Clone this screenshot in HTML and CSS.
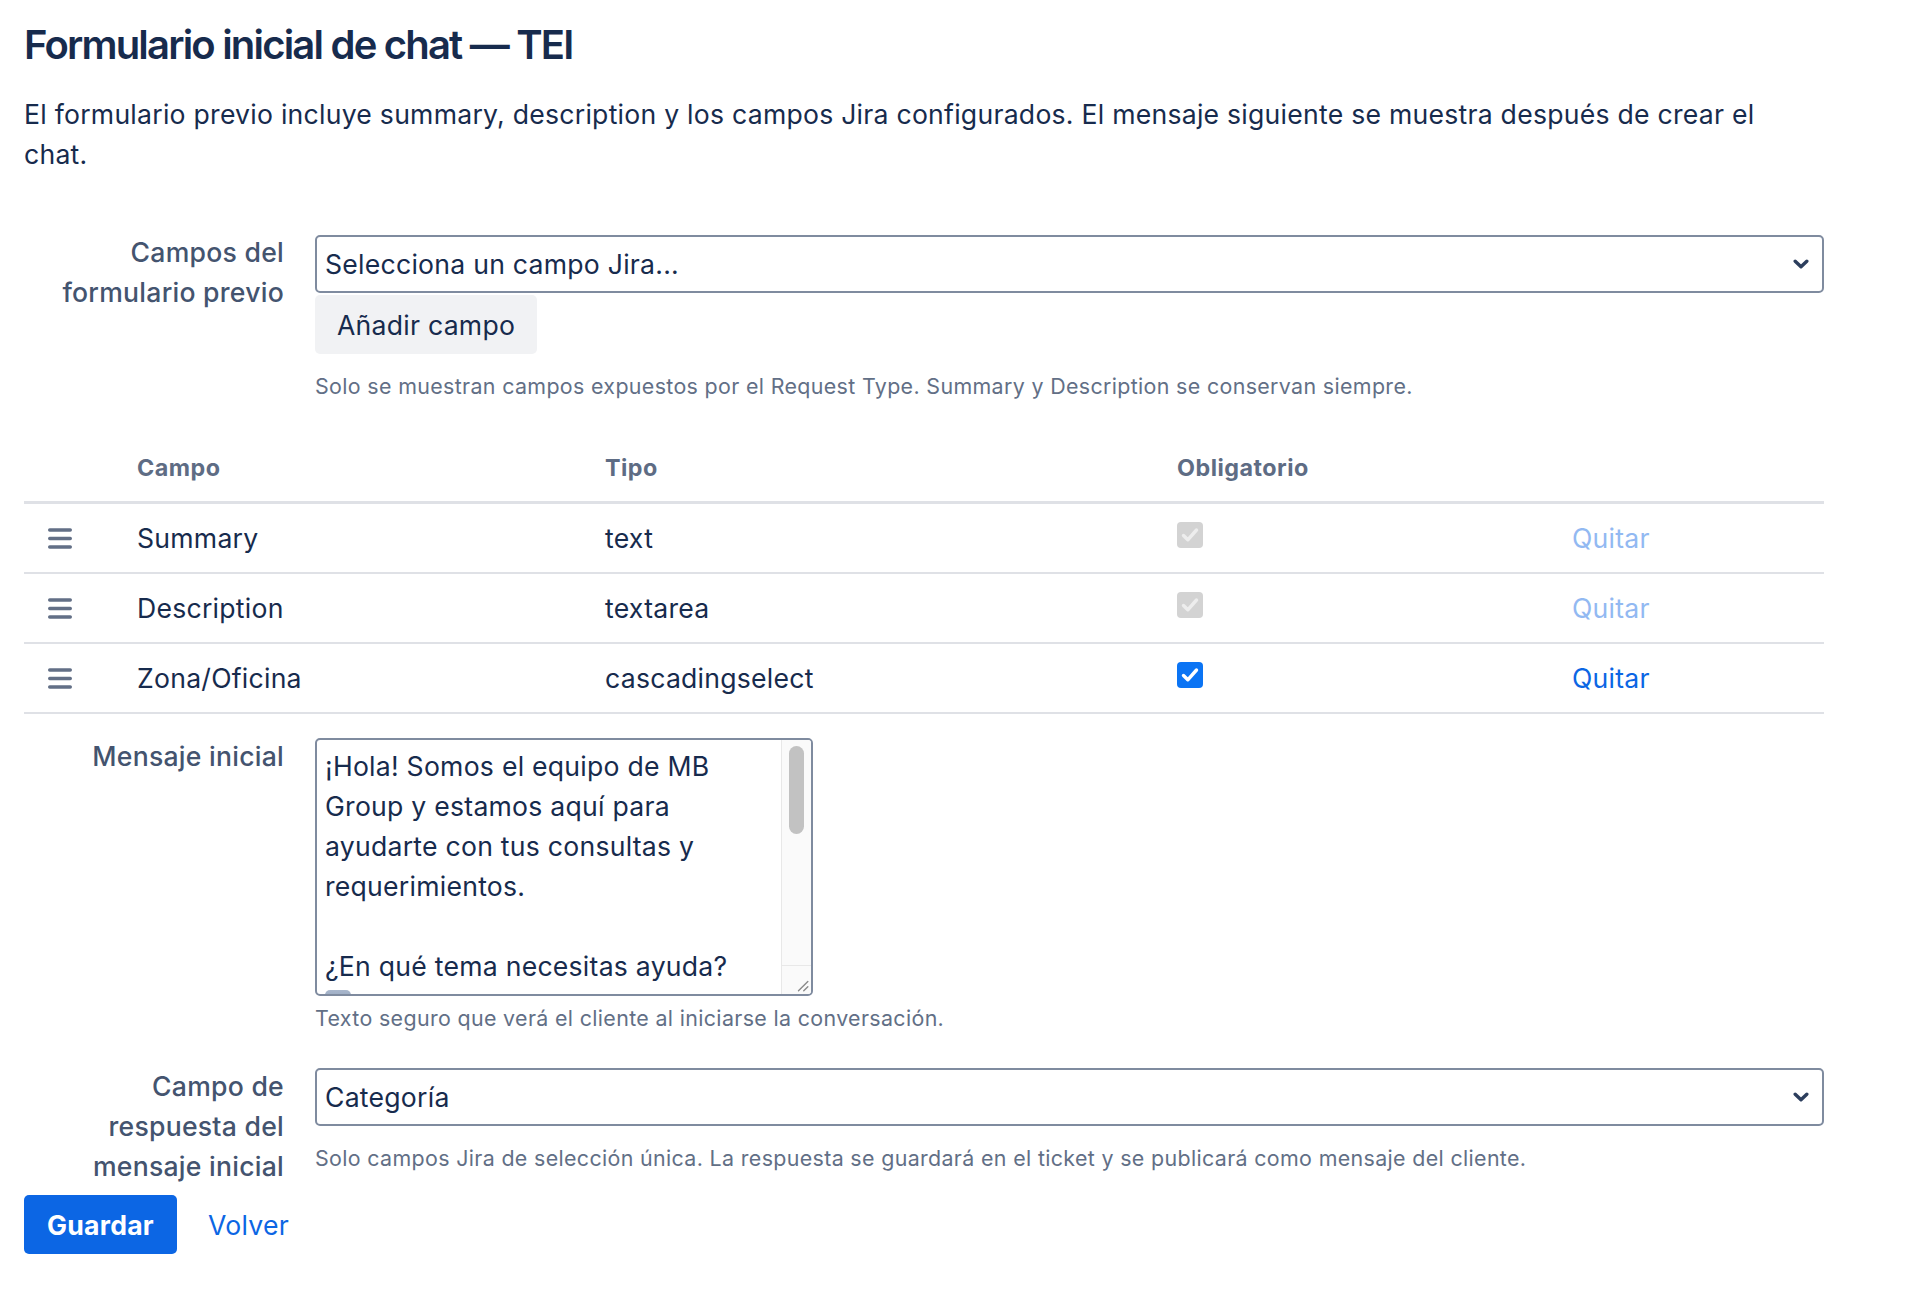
FILE: index.html
```html
<!DOCTYPE html>
<html lang="es">
<head>
<meta charset="utf-8">
<title>Formulario inicial de chat — TEI</title>
<link rel="stylesheet" href="styles.css">
</head>
<body>
<main class="page">
  <h1 class="title">Formulario inicial de chat — TEI</h1>
  <p class="intro">El formulario previo incluye summary, description y los campos Jira configurados. El mensaje siguiente se muestra después de crear el chat.</p>

  <div class="form-row row-fields">
    <label class="form-label" for="field-select">Campos del formulario previo</label>
    <div class="form-control">
      <div class="select-wrap">
        <select id="field-select" class="select"><option>Selecciona un campo Jira...</option></select>
        <svg class="chevron" viewBox="0 0 16 10" aria-hidden="true"><path d="M2.2 2.2 L8 7.8 L13.8 2.2" fill="none" stroke="#2C3E5D" stroke-width="3.4" stroke-linecap="round" stroke-linejoin="round"/></svg>
      </div>
      <button class="btn-secondary" type="button">Añadir campo</button>
      <p class="hint">Solo se muestran campos expuestos por el Request Type. Summary y Description se conservan siempre.</p>
    </div>
  </div>

  <table class="fields-table">
    <colgroup>
      <col class="c-drag"><col class="c-name"><col class="c-type"><col class="c-req"><col class="c-act">
    </colgroup>
    <thead>
      <tr><th></th><th>Campo</th><th>Tipo</th><th>Obligatorio</th><th></th></tr>
    </thead>
    <tbody>
      <tr>
        <td class="drag"><svg class="grip" viewBox="0 0 24 21" aria-hidden="true"><rect x="0" y="0.3" width="24" height="3.4" rx="1.7"/><rect x="0" y="8.8" width="24" height="3.4" rx="1.7"/><rect x="0" y="17.3" width="24" height="3.4" rx="1.7"/></svg></td>
        <td>Summary</td>
        <td>text</td>
        <td><span class="check is-disabled" role="checkbox" aria-checked="true" aria-disabled="true"><svg viewBox="0 0 26 26"><path d="M6.5 13.5 L10.8 17.8 L19.5 8" fill="none" stroke-width="3.4" stroke-linecap="round" stroke-linejoin="round"/></svg></span></td>
        <td><a class="remove is-disabled">Quitar</a></td>
      </tr>
      <tr>
        <td class="drag"><svg class="grip" viewBox="0 0 24 21" aria-hidden="true"><rect x="0" y="0.3" width="24" height="3.4" rx="1.7"/><rect x="0" y="8.8" width="24" height="3.4" rx="1.7"/><rect x="0" y="17.3" width="24" height="3.4" rx="1.7"/></svg></td>
        <td>Description</td>
        <td>textarea</td>
        <td><span class="check is-disabled" role="checkbox" aria-checked="true" aria-disabled="true"><svg viewBox="0 0 26 26"><path d="M6.5 13.5 L10.8 17.8 L19.5 8" fill="none" stroke-width="3.4" stroke-linecap="round" stroke-linejoin="round"/></svg></span></td>
        <td><a class="remove is-disabled">Quitar</a></td>
      </tr>
      <tr>
        <td class="drag"><svg class="grip" viewBox="0 0 24 21" aria-hidden="true"><rect x="0" y="0.3" width="24" height="3.4" rx="1.7"/><rect x="0" y="8.8" width="24" height="3.4" rx="1.7"/><rect x="0" y="17.3" width="24" height="3.4" rx="1.7"/></svg></td>
        <td>Zona/Oficina</td>
        <td>cascadingselect</td>
        <td><span class="check is-on" role="checkbox" aria-checked="true"><svg viewBox="0 0 26 26"><path d="M6.5 13.5 L10.8 17.8 L19.5 8" fill="none" stroke-width="3.4" stroke-linecap="round" stroke-linejoin="round"/></svg></span></td>
        <td><a class="remove" href="#">Quitar</a></td>
      </tr>
    </tbody>
  </table>

  <div class="form-row row-message">
    <label class="form-label" for="msg">Mensaje inicial</label>
    <div class="form-control">
      <div class="textarea" id="msg" role="textbox" aria-multiline="true">
        <div class="textarea-text">¡Hola! Somos el equipo de MB
Group y estamos aquí para
ayudarte con tus consultas y
requerimientos.

¿En qué tema necesitas ayuda?
<span class="keycap" aria-hidden="true"></span></div>
        <div class="scroll-track"><div class="scroll-thumb"></div></div>
        <div class="resizer"><svg viewBox="0 0 12 12" aria-hidden="true"><path d="M11 3 L3 11 M11 7.5 L7.5 11" stroke="#8A8A8A" stroke-width="1.2" stroke-linecap="round"/></svg></div>
      </div>
      <p class="hint hint-tight">Texto seguro que verá el cliente al iniciarse la conversación.</p>
    </div>
  </div>

  <div class="form-row row-answer">
    <label class="form-label" for="answer-select">Campo de respuesta del mensaje inicial</label>
    <div class="form-control">
      <div class="select-wrap">
        <select id="answer-select" class="select"><option>Categoría</option></select>
        <svg class="chevron" viewBox="0 0 16 10" aria-hidden="true"><path d="M2.2 2.2 L8 7.8 L13.8 2.2" fill="none" stroke="#2C3E5D" stroke-width="3.4" stroke-linecap="round" stroke-linejoin="round"/></svg>
      </div>
      <p class="hint">Solo campos Jira de selección única. La respuesta se guardará en el ticket y se publicará como mensaje del cliente.</p>
    </div>
  </div>

  <div class="actions">
    <button class="btn-primary" type="submit">Guardar</button>
    <a class="link-back" href="#">Volver</a>
  </div>
</main>
</body>
</html>
```

FILE: styles.css
```css
* { box-sizing: border-box; }

html, body {
  margin: 0;
  background: #ffffff;
}

body {
  font-family: Inter, "Noto Sans", "Liberation Sans", sans-serif;
  font-size: 26.6px;
  line-height: 40px;
  letter-spacing: 0.25px;
  color: #172B4D;
}

.page {
  width: 1800px;
  margin-left: 24px;
  padding-top: 17px;
}

.title {
  margin: 0;
  font-size: 40px;
  line-height: 56px;
  font-weight: 600;
  letter-spacing: -1.8px;
  color: #172B4D;
}

.intro {
  margin: 21px 0 0;
  max-width: 1790px;
}

.form-row {
  display: grid;
  grid-template-columns: 260px 1509px;
  column-gap: 31px;
}

.row-fields { margin-top: 58px; }
.row-message { margin-top: 22px; }
.row-answer { margin-top: 32px; }

.form-label {
  padding-left: 20px;
  text-align: right;
  font-weight: 500;
  color: #44546F;
}

.select-wrap {
  position: relative;
  margin-top: 3px;
}

.row-answer .select-wrap { margin-top: 2px; }

.select {
  appearance: none;
  -webkit-appearance: none;
  display: block;
  width: 100%;
  height: 58px;
  margin: 0;
  padding: 0 44px 0 8px;
  border: 2px solid #7F8B9F;
  border-radius: 5px;
  background: #ffffff;
  font: inherit;
  letter-spacing: inherit;
  color: #172B4D;
}

.chevron {
  position: absolute;
  right: 15px;
  top: 24px;
  width: 16px;
  height: 10px;
  pointer-events: none;
}

.btn-secondary {
  display: block;
  height: 59px;
  margin-top: 2px;
  padding: 0 22px;
  border: 0;
  border-radius: 5px;
  background: #F1F2F4;
  font: inherit;
  letter-spacing: inherit;
  color: #172B4D;
}

.hint {
  margin: 16px 0 0;
  font-size: 21.4px;
  line-height: 32px;
  letter-spacing: 0.35px;
  color: #626F86;
}

.hint-tight { margin-top: 6px; }

/* table */
.fields-table {
  width: 1800px;
  margin-top: 32px;
  table-layout: fixed;
  border-collapse: separate;
  border-spacing: 0;
}

.c-drag { width: 113px; }
.c-name { width: 468px; }
.c-type { width: 572px; }
.c-req { width: 395px; }
.c-act { width: 252px; }

.fields-table th {
  height: 70px;
  padding: 0;
  text-align: left;
  vertical-align: middle;
  font-size: 23.3px;
  font-weight: 700;
  letter-spacing: 0.5px;
  color: #5E6C84;
  border-bottom: 3px solid #DFE1E6;
}

.fields-table td {
  height: 70px;
  padding: 0;
  vertical-align: middle;
  border-bottom: 2px solid #DFE1E6;
}

.fields-table td.drag { padding-left: 24px; }

.grip {
  display: block;
  width: 24px;
  height: 21px;
  fill: #626F86;
}

.check {
  display: block;
  width: 26px;
  height: 26px;
  margin-top: -6px;
  border-radius: 4px;
}

.check svg {
  display: block;
  width: 26px;
  height: 26px;
}

.check.is-disabled { background: #D3D3D3; }
.check.is-disabled path { stroke: #EDEDED; }
.check.is-on { background: #0B74F4; }
.check.is-on path { stroke: #ffffff; }

.remove {
  color: #0C66E4;
  text-decoration: none;
}

.remove.is-disabled { color: #92B9F2; }

/* fake textarea */
.textarea {
  position: relative;
  width: 498px;
  height: 258px;
  margin-top: 2px;
  border: 2px solid #7F8B9F;
  border-radius: 5px;
  overflow: hidden;
  background: #ffffff;
}

.textarea-text {
  padding: 6px 40px 0 8px;
  white-space: pre-line;
  color: #172B4D;
}

.keycap {
  display: inline-block;
  width: 26px;
  height: 26px;
  border-radius: 5px;
  background: linear-gradient(#A9B7CC, #7488A8);
  vertical-align: 0;
}

.scroll-track {
  position: absolute;
  top: 0;
  right: 0;
  width: 30px;
  height: 226px;
  background: #FAFAFA;
  border-left: 1px solid #E8E8E8;
  border-bottom: 1px solid #E8E8E8;
}

.scroll-thumb {
  width: 15px;
  height: 88px;
  margin: 6px 0 0 7px;
  border-radius: 8px;
  background: #C2C2C2;
}

.resizer {
  position: absolute;
  right: 0;
  bottom: 0;
  width: 30px;
  height: 28px;
  background: #FAFAFA;
  border-left: 1px solid #E8E8E8;
}

.resizer svg {
  position: absolute;
  right: 2px;
  bottom: 2px;
  width: 14px;
  height: 14px;
}

/* actions */
.actions {
  display: flex;
  align-items: center;
  margin-top: 9px;
}

.btn-primary {
  width: 153px;
  height: 59px;
  padding: 0;
  border: 0;
  border-radius: 5px;
  background: #0C66E4;
  color: #ffffff;
  font: inherit;
  font-weight: 700;
  letter-spacing: inherit;
}

.link-back {
  margin-left: 31px;
  color: #0C66E4;
  text-decoration: none;
}
```
